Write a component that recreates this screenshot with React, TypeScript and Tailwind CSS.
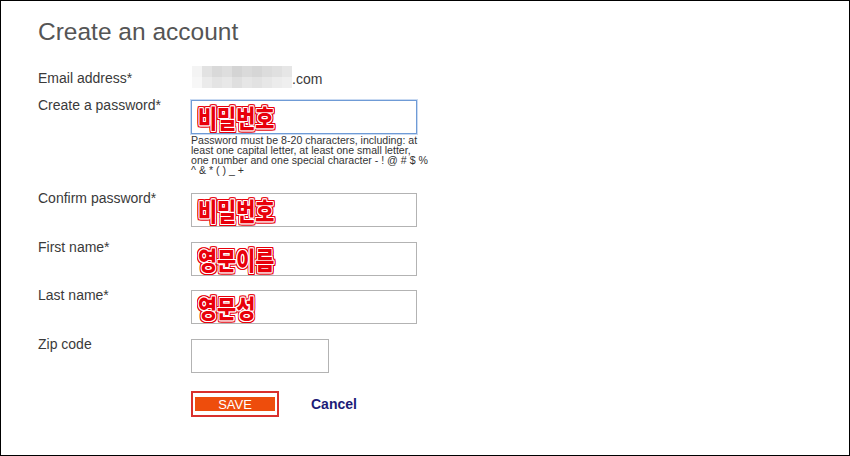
import React from "react";

const KO =
  "inline-block origin-left scale-x-[0.83] font-['Noto_Sans_CJK_KR',sans-serif] font-black text-[25px] leading-none text-[#e8000b] [text-shadow:1px_0_#fff,-1px_0_#fff,0_1px_#fff,0_-1px_#fff,1px_1px_#fff,-1px_-1px_#fff,1px_-1px_#fff,-1px_1px_#fff,2px_0_#e8000b,-2px_0_#e8000b,0_2px_#e8000b,0_-2px_#e8000b,2px_2px_#e8000b,-2px_-2px_#e8000b,2px_-2px_#e8000b,-2px_2px_#e8000b,2px_1px_#e8000b,-2px_1px_#e8000b,2px_-1px_#e8000b,-2px_-1px_#e8000b,1px_2px_#e8000b,-1px_2px_#e8000b,1px_-2px_#e8000b,-1px_-2px_#e8000b]";

function Label({ children }: { children: React.ReactNode }) {
  return <div className="w-[153px] shrink-0 text-[14px] leading-[16px] text-[#3a3a3a]">{children}</div>;
}

function Field({ text, focused, narrow }: { text?: string; focused?: boolean; narrow?: boolean }) {
  return (
    <div
      className={
        "mt-[3px] h-[34px] flex items-center pl-[6px] bg-white border " +
        (narrow ? "w-[138px] " : "w-[226px] ") +
        (focused ? "border-[#6f9bd6] shadow-[0_0_0_1px_#c9daf2]" : "border-[#b3b3b3]")
      }
    >
      {text ? <span className={KO}>{text}</span> : null}
    </div>
  );
}

const mosaic = [
  ["#f4f4f4", "#e2e2e2", "#d9d9d9", "#dedede", "#d4d4d4", "#dadada", "#d6d6d6", "#dcdcdc", "#e0e0e0", "#e6e6e6"],
  ["#f7f7f7", "#ebebeb", "#e4e4e4", "#e8e8e8", "#dfdfdf", "#e6e6e6", "#e2e2e2", "#e7e7e7", "#ececec", "#efefef"],
];

export default function App() {
  return (
    <div className="w-[850px] h-[456px] border border-black bg-white pl-[37px] pt-[17px] font-['Liberation_Sans',Arial,sans-serif] overflow-hidden">
      <div className="text-[24.5px] leading-[28px] text-[#555555]">Create an account</div>

      <div className="mt-[24px] flex h-[16px]">
        <Label>Email address*</Label>
        <div className="flex items-center ml-[1px]">
          <div className="flex flex-col -mt-[2px]">
            {mosaic.map((row, i) => (
              <div key={i} className="flex">
                {row.map((c, j) => (
                  <div key={j} className="w-[10px] h-[11px]" style={{ backgroundColor: c }} />
                ))}
              </div>
            ))}
          </div>
          <span className="text-[14px] leading-[16px] text-[#3a3a3a] mt-[2px]">.com</span>
        </div>
      </div>

      <div className="mt-[11px] flex">
        <Label>Create a password*</Label>
        <div className="flex flex-col">
          <Field text="비밀번호" focused />
          <div className="mt-[1px] w-[240px] whitespace-nowrap text-[10.6px] leading-[10px] text-[#333333]">
            <div>Password must be 8-20 characters, including: at</div>
            <div>least one capital letter, at least one small letter,</div>
            <div>one number and one special character - ! @ # $ %</div>
            <div>^ &amp; * ( ) _ +</div>
          </div>
        </div>
      </div>

      <div className="mt-[15px] flex">
        <Label>Confirm password*</Label>
        <Field text="비밀번호" />
      </div>

      <div className="mt-[12px] flex">
        <Label>First name*</Label>
        <Field text="영문이름" />
      </div>

      <div className="mt-[11px] flex">
        <Label>Last name*</Label>
        <Field text="영문성" />
      </div>

      <div className="mt-[12px] flex">
        <Label>Zip code</Label>
        <Field narrow />
      </div>

      <div className="mt-[18px] flex items-center pl-[153px]">
        <div className="w-[88px] h-[26px] border-2 border-[#d9302c] bg-white px-[2px] pt-[4px]">
          <div className="h-[14px] bg-[#ee4d0c] flex items-center justify-center text-white text-[13px] leading-none">
            SAVE
          </div>
        </div>
        <span className="ml-[32px] text-[14px] font-bold text-[#1c1c78]">Cancel</span>
      </div>
    </div>
  );
}
